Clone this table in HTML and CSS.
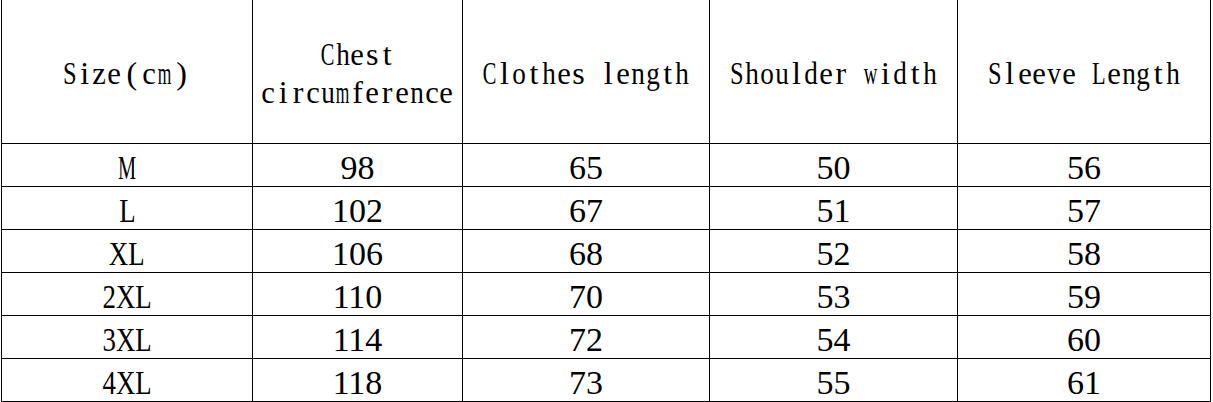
FILE: index.html
```html
<!DOCTYPE html>
<html>
<head>
<meta charset="utf-8">
<link rel="stylesheet" href="styles.css">
</head>
<body>
<div class="table">
  <div class="cell head"><div class="hx"><span class="mono-line">Size(cm)</span></div></div>
  <div class="cell head"><div class="hx"><span class="mono-line">Chest</span><span class="mono-line">circumference</span></div></div>
  <div class="cell head"><div class="hx"><span class="mono-line">Clothes length</span></div></div>
  <div class="cell head"><div class="hx"><span class="mono-line">Shoulder width</span></div></div>
  <div class="cell head last"><div class="hx"><span class="mono-line">Sleeve Length</span></div></div>

  <div class="cell"><span class="sz sz-m">M</span></div>
  <div class="cell">98</div><div class="cell">65</div><div class="cell">50</div><div class="cell last">56</div>

  <div class="cell"><span class="sz">L</span></div>
  <div class="cell">102</div><div class="cell">67</div><div class="cell">51</div><div class="cell last">57</div>

  <div class="cell"><span class="sz">XL</span></div>
  <div class="cell">106</div><div class="cell">68</div><div class="cell">52</div><div class="cell last">58</div>

  <div class="cell"><span class="sz">2XL</span></div>
  <div class="cell">110</div><div class="cell">70</div><div class="cell">53</div><div class="cell last">59</div>

  <div class="cell"><span class="sz">3XL</span></div>
  <div class="cell">114</div><div class="cell">72</div><div class="cell">54</div><div class="cell last">60</div>

  <div class="cell"><span class="sz">4XL</span></div>
  <div class="cell">118</div><div class="cell">73</div><div class="cell">55</div><div class="cell last">61</div>
</div>
<script src="script.js"></script>
</body>
</html>
```

FILE: styles.css
```css
html, body {
  margin: 0;
  padding: 0;
  background: #fff;
}
body {
  padding-left: 1px;
}
.table {
  display: grid;
  grid-template-columns: 251px 210px 247px 248px 254px;
  grid-template-rows: 144px repeat(6, 43px);
  color: #000;
}
.cell {
  box-sizing: border-box;
  border-left: 1px solid #000;
  border-bottom: 1px solid #000;
  display: flex;
  align-items: center;
  justify-content: center;
  font-family: "Liberation Serif", serif;
  font-size: 34px;
  line-height: 1;
  padding-top: 5px;
  white-space: nowrap;
}
.cell.last {
  border-right: 1px solid #000;
}
.cell.head {
  font-size: 32px;
  line-height: 38px;
  padding-top: 3px;
}
.hx {
  display: flex;
  flex-direction: column;
  align-items: center;
}
.mono-line {
  display: block;
  white-space: nowrap;
}
.ch {
  display: inline-flex;
  justify-content: center;
  width: 14.85px;
}
.ch.wide {
  width: 20px;
}
.g {
  display: inline-block;
  flex: none;
  transform-origin: center;
}
.sz {
  display: inline-block;
  transform: scaleX(0.79);
}
.sz-m {
  transform: scaleX(0.6);
}
```

FILE: script.js
```js
document.querySelectorAll('.mono-line').forEach(function (line) {
  var text = line.textContent;
  line.textContent = '';
  for (var i = 0; i < text.length; i++) {
    var c = text[i];
    var cell = document.createElement('span');
    cell.className = 'ch' + (c === '(' || c === ')' ? ' wide' : '');
    var g = document.createElement('span');
    g.className = 'g';
    g.textContent = c === ' ' ? '\u00a0' : c;
    cell.appendChild(g);
    line.appendChild(cell);
    var max = c === '(' || c === ')' ? 18 : 13.6;
    var w = g.getBoundingClientRect().width;
    if (w > max) {
      g.style.transform = 'scaleX(' + (max / w).toFixed(3) + ')';
    }
  }
});
```
